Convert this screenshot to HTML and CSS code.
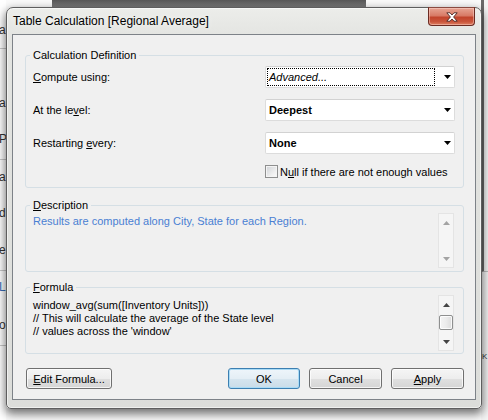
FILE: index.html
```html
<!DOCTYPE html>
<html lang="en">
<head>
<meta charset="utf-8">
<title>Table Calculation</title>
<link rel="stylesheet" href="styles.css">
</head>
<body>
<div class="desk">
  <div class="bg-left">
    <div class="seg s1"><div class="frag">a</div></div>
    <div class="seg s2"><div class="frag">a</div><div class="frag gap22">P</div></div>
    <div class="seg s3"><div class="frag">a</div><div class="frag gap22">d</div><div class="frag gap23">e</div></div>
    <div class="seg s4"><div class="frag blue">L</div><div class="frag gap24">o</div></div>
    <div class="seg s5"></div>
  </div>
  <div class="bg-mid"><div class="bg-topbar"></div></div>
  <div class="bg-right">
    <div class="rseg r1"></div>
    <div class="rseg r2"><div class="kfrag">K</div></div>
  </div>

  <div class="window">
    <div class="titlebar">
      <span class="title">Table Calculation [Regional Average]</span>
      <button class="close" type="button" aria-label="Close">
        <svg width="12" height="10" viewBox="0 0 12 10"><path d="M0.8 0.8h3.2l2 2.2 2-2.2h3.2l-3.6 4.2 3.6 4.2h-3.2l-2-2.2-2 2.2H0.8l3.6-4.2z" fill="#fff" stroke="#4a2622" stroke-width="0.9" stroke-linejoin="round"/></svg>
      </button>
    </div>
    <div class="client">
      <fieldset class="group calc">
        <legend>Calculation Definition</legend>
        <div class="calc-grid">
          <span class="lbl"><u>C</u>ompute using:</span>
          <div class="combo">
            <span class="focus"><i>Advanced...</i></span>
            <svg class="arrow" width="7" height="4" viewBox="0 0 7 4"><path d="M0 0h7L3.5 4z" fill="#000"/></svg>
          </div>
          <span class="lbl">At the le<u>v</u>el:</span>
          <div class="combo">
            <span class="val">Deepest</span>
            <svg class="arrow" width="7" height="4" viewBox="0 0 7 4"><path d="M0 0h7L3.5 4z" fill="#000"/></svg>
          </div>
          <span class="lbl">Restarting <u>e</u>very:</span>
          <div class="combo">
            <span class="val">None</span>
            <svg class="arrow" width="7" height="4" viewBox="0 0 7 4"><path d="M0 0h7L3.5 4z" fill="#000"/></svg>
          </div>
          <span></span>
          <label class="check"><span class="box"></span><span>N<u>u</u>ll if there are not enough values</span></label>
        </div>
      </fieldset>

      <fieldset class="group desc">
        <legend><u>D</u>escription</legend>
        <div class="pane">
          <div class="desc-text">Results are computed along City, State for each Region.</div>
          <div class="vscroll disabled">
            <svg class="sarrow" width="7" height="4" viewBox="0 0 7 4"><path d="M0 4L3.5 0 7 4z"/></svg>
            <svg class="sarrow down" width="7" height="4" viewBox="0 0 7 4"><path d="M0 0h7L3.5 4z"/></svg>
          </div>
        </div>
      </fieldset>

      <fieldset class="group formula">
        <legend><u>F</u>ormula</legend>
        <div class="pane">
          <div class="formula-text">
            <div>window_avg(sum([Inventory Units]))</div>
            <div>// This will calculate the average of the State level</div>
            <div>// values across the 'window'</div>
          </div>
          <div class="vscroll">
            <svg class="sarrow" width="7" height="4" viewBox="0 0 7 4"><path d="M0 4L3.5 0 7 4z"/></svg>
            <div class="thumb"></div>
            <svg class="sarrow down" width="7" height="4" viewBox="0 0 7 4"><path d="M0 0h7L3.5 4z"/></svg>
          </div>
        </div>
      </fieldset>

      <div class="buttons">
        <button class="btn edit" type="button"><u>E</u>dit Formula...</button>
        <button class="btn ok default" type="button">OK</button>
        <button class="btn" type="button">Cancel</button>
        <button class="btn" type="button"><u>A</u>pply</button>
      </div>
    </div>
  </div>
</div>
</body>
</html>
```

FILE: styles.css
```css
* { box-sizing: border-box; }
html, body { margin: 0; padding: 0; }
body {
  width: 488px;
  height: 420px;
  overflow: hidden;
  background: #fafafa;
  font-family: "Liberation Sans", Arial, sans-serif;
  font-size: 11px;
  color: #000;
}

/* ---------- desktop behind the dialog ---------- */
.desk {
  position: relative;
  width: 488px;
  height: 420px;
  display: flex;
  overflow: hidden;
  background: #fafafa;
}
.bg-left {
  width: 6px;
  flex: none;
  background: #fff;
  overflow: hidden;
  font-size: 12px;
  line-height: 14px;
  color: #333;
  display: flex;
  flex-direction: column;
}
.bg-left .seg { border-bottom: 1px solid #c9c9c9; flex: none; }
.bg-left .s1 { height: 49px; padding-top: 23px; }
.bg-left .s2 { height: 111px; padding-top: 47px; }
.bg-left .s3 { height: 111px; padding-top: 10px; }
.bg-left .s4 { height: 75px; padding-top: 9px; }
.bg-left .s5 { flex: 1; border-bottom: 0; }
.frag { margin-left: -1px; white-space: nowrap; }
.gap22 { margin-top: 22px; }
.gap23 { margin-top: 23px; }
.gap24 { margin-top: 24px; }
.frag.blue { color: #3a6db5; }

.bg-mid { flex: 1; }
.bg-topbar {
  margin-left: 46px;
  width: 314px;
  height: 7px;
  background: linear-gradient(#575757, #7a7a7a);
}
.bg-right {
  width: 7px;
  flex: none;
  background: #f4f4f4;
  display: flex;
  flex-direction: column;
  overflow: hidden;
  color: #333;
}
.bg-right .r1 { height: 272px; border-bottom: 1px solid #bdbdbd; border-left: 3px solid #6a6a6a; }
.bg-right .r2 { flex: 1; padding-top: 80px; padding-left: 1px; }
.kfrag { font-size: 8px; line-height: 10px; }

/* ---------- dialog window ---------- */
.window {
  position: absolute;
  left: 6px;
  top: 7px;
  width: 476px;
  height: 402px;
  border: 1px solid #5e5e5e;
  border-radius: 7px 7px 5px 5px;
  padding: 0 5px 8px 5px;
  background: linear-gradient(#ecedea 0, #e3e4e1 30px, #dcddda 100%);
  box-shadow: 0 4px 10px 1px rgba(0, 0, 0, 0.55), inset 0 0 0 1px rgba(255, 255, 255, 0.55);
  display: flex;
  flex-direction: column;
}
.titlebar {
  height: 26px;
  flex: none;
  display: flex;
  align-items: flex-start;
}
.title {
  margin: 6px 0 0 1px;
  font-size: 12px;
  line-height: 15px;
  color: #000;
  text-shadow: 0 0 6px rgba(255, 255, 255, 0.9);
  white-space: nowrap;
}
.close {
  margin: -1px 1px 0 auto;
  width: 47px;
  height: 19px;
  padding: 0;
  border: 1px solid #6b2b22;
  border-top-color: #8a4a40;
  border-radius: 0 0 4px 4px;
  background: linear-gradient(#e7a493 0%, #d87a66 45%, #c2442c 55%, #c9553b 80%, #de8062 100%);
  box-shadow: inset 0 0 0 1px rgba(255, 220, 210, 0.45);
  display: flex;
  align-items: center;
  justify-content: center;
}
.close svg { display: block; margin-top: 1px; }

.client {
  flex: 1;
  border: 1px solid #7d8288;
  background: #f0f0f0;
  padding: 13px 11px 10px 12px;
  display: flex;
  flex-direction: column;
}

/* ---------- group boxes ---------- */
.group {
  margin: 0;
  min-width: 0;
  border: 1px solid #d5dfe5;
  border-radius: 3px;
  padding: 0 8px 0 7px;
}
.group legend {
  padding: 0 3px;
  margin-left: -3px;
  font-size: 11px;
  line-height: 15px;
  color: #000;
}
.calc { padding-top: 3px; padding-bottom: 9px; }
.calc-grid {
  display: grid;
  grid-template-columns: 232px 190px;
  grid-template-rows: 22px 22px 22px 13px;
  row-gap: 11px;
  align-items: center;
}
.lbl { line-height: 15px; white-space: nowrap; }
.combo {
  height: 22px;
  background: #fff;
  border: 1px solid #dcdcdc;
  border-top-color: #d2d2d2;
  border-radius: 2px;
  display: flex;
  align-items: center;
}
.combo .val {
  padding-left: 3px;
  font-weight: bold;
}
.combo .focus {
  margin-left: 1px;
  width: 168px;
  height: 18px;
  border: 1px dotted #000;
  padding-left: 1px;
  line-height: 16px;
}
.combo .arrow { margin-left: auto; margin-right: 3px; display: block; }

.check {
  display: flex;
  align-items: center;
  height: 13px;
  white-space: nowrap;
}
.check .box {
  width: 13px;
  height: 13px;
  flex: none;
  margin-right: 2px;
  border: 1px solid #8e8f8f;
  background: linear-gradient(135deg, #cfd2d6 0%, #f1f1f1 70%, #fbfbfb 100%);
  box-shadow: inset 0 0 0 1px #f4f4f4;
}

.desc { margin-top: 10px; padding-right: 9px; padding-bottom: 3px; }
.formula { margin-top: 8px; padding-right: 9px; padding-bottom: 2px; }
.pane { display: flex; }
.desc .pane { height: 55px; }
.formula .pane { height: 56px; }
.desc-text {
  flex: 1;
  padding-top: 1px;
  line-height: 15px;
  color: #4a7fd3;
}
.formula-text {
  flex: 1;
  padding-top: 4px;
  line-height: 13px;
  color: #000;
  white-space: nowrap;
}

/* ---------- scrollbars ---------- */
.vscroll {
  width: 16px;
  flex: none;
  border: 1px solid #e4e4e4;
  background: #f5f5f5;
  display: flex;
  flex-direction: column;
  align-items: center;
  padding-top: 7px;
  padding-bottom: 6px;
}
.sarrow { display: block; fill: #444; }
.vscroll.disabled .sarrow { fill: #a3a3a3; }
.sarrow.down { margin-top: auto; }
.thumb {
  margin-top: 8px;
  width: 14px;
  height: 15px;
  border: 1px solid #8e8f8f;
  border-radius: 2px;
  background: linear-gradient(90deg, #f4f4f4 0%, #ececec 50%, #dcdcdc 100%);
  box-shadow: inset 0 0 0 1px rgba(255, 255, 255, 0.8);
}

/* ---------- buttons ---------- */
.buttons {
  margin-top: 14px;
  display: flex;
  gap: 9px;
  height: 21px;
}
.btn {
  width: 73px;
  height: 21px;
  padding: 0;
  font-family: inherit;
  font-size: 11px;
  color: #000;
  border: 1px solid #707070;
  border-radius: 3px;
  background: linear-gradient(#f5f5f5 0%, #ededed 50%, #e0e0e0 50%, #d5d5d5 100%);
  box-shadow: inset 0 0 0 1px rgba(255, 255, 255, 0.75);
}
.btn.edit { width: 86px; margin-left: 1px; }
.btn.ok { margin-left: auto; width: 72px; }
.btn.default {
  border-color: #3c7fb1;
  background: linear-gradient(#eef5fa 0%, #e4eef5 50%, #d6e5ef 50%, #cadce8 100%);
  box-shadow: inset 0 0 0 1px #a9dbf6;
}
```
